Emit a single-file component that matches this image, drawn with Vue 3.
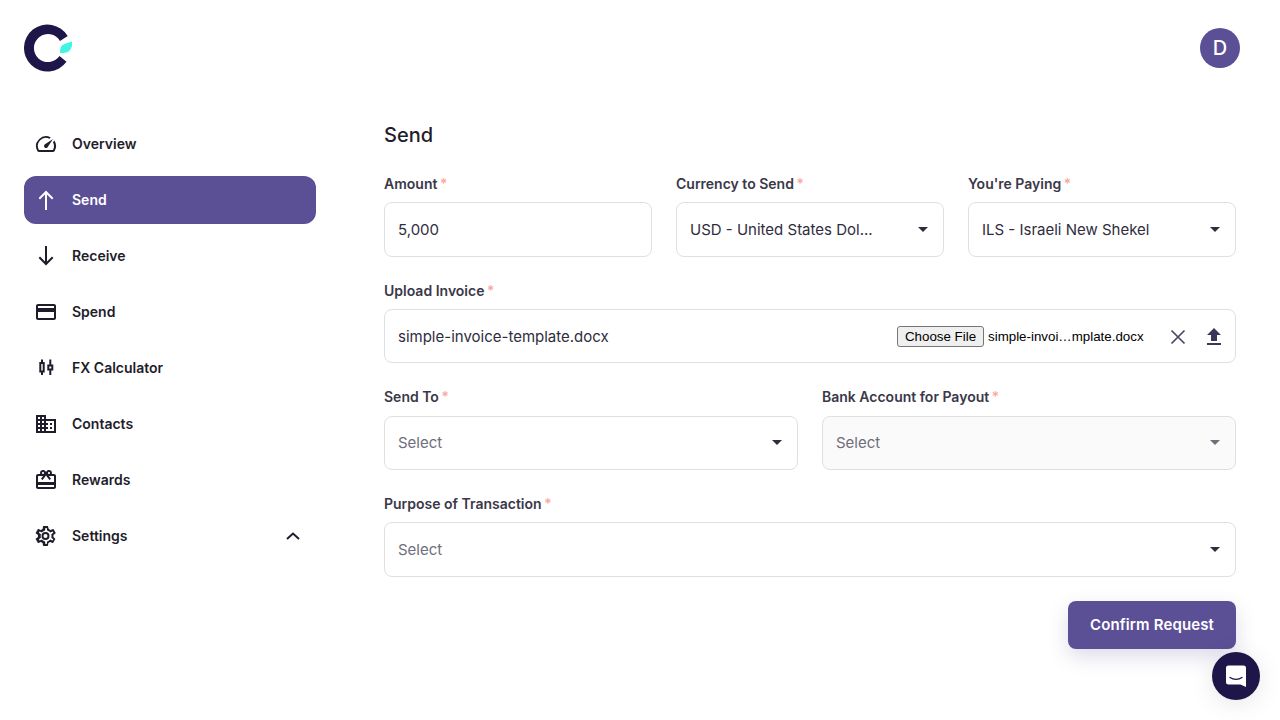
<script setup>
const navItems = [
  { label: 'Overview', icon: 'overview' },
  { label: 'Send', icon: 'send', active: true },
  { label: 'Receive', icon: 'receive' },
  { label: 'Spend', icon: 'spend' },
  { label: 'FX Calculator', icon: 'fx' },
  { label: 'Contacts', icon: 'contacts' },
  { label: 'Rewards', icon: 'rewards' },
  { label: 'Settings', icon: 'settings', chevron: true }
]
</script>

<template>
  <div class="page">
    <header class="topbar">
      <svg class="logo" width="48" height="48" viewBox="0 0 48 48">
        <path d="M43.700 12 36 17A14 14 0 1 0 35.500 32L42.500 37.800A23.500 23.500 0 1 1 43.700 12Z" fill="#1e1548" />
        <path d="M48 17.500V21C47.500 26 44 29 39.500 29L37 29C36.300 29 36 28.600 36 28L36.300 25C36.500 23 38 21.200 40 20.300C42.500 19.200 45 18.500 48 17.500Z" fill="#3ff5e6" />
      </svg>
      <div class="avatar">D</div>
    </header>

    <div class="body">
      <nav class="sidebar">
        <a v-for="item in navItems" :key="item.label" class="nav-item" :class="{ active: item.active }">
          <svg class="nav-icon" width="24" height="24" viewBox="0 0 24 24" fill="currentColor">
            <template v-if="item.icon === 'overview'">
              <path d="M20.400 8.600 19 10.300A8 8 0 0 1 19.200 17.500L19 18H5A8 8 0 0 1 15.300 6.700L16.800 5.400A10 10 0 0 0 3.300 19C3.700 19.600 4.300 20 5 20H19C19.700 20 20.300 19.600 20.700 19A10 10 0 0 0 20.400 8.600Z" />
              <path d="M10.600 15.400A2 2 0 0 0 13.400 15.400L19 7 10.600 12.600A2 2 0 0 0 10.600 15.400Z" />
            </template>
            <path v-else-if="item.icon === 'send'" d="M13 22V6.400l5 5L19.400 10 12 2.600 4.600 10 6 11.400l5-5V22Z" />
            <path v-else-if="item.icon === 'receive'" d="M11 2v15.600l-5-5L4.600 14 12 21.400 19.400 14 18 12.600l-5 5V2Z" />
            <path v-else-if="item.icon === 'spend'" d="M20 4H4C2.900 4 2 4.900 2 6v12c0 1.100.9 2 2 2h16c1.100 0 2-.9 2-2V6c0-1.100-.9-2-2-2Zm0 14H4v-6h16v6Zm0-10H4V6h16v2Z" />
            <template v-else-if="item.icon === 'fx'">
              <path d="M7 3.500h2V6h1.700v10.500H9V19H7v-2.500H5.300V6H7V3.500Zm.3 4.500v6.500h1.400V8H7.300Z" />
              <path d="M15.300 3.500h2v5h2v6h-2V19h-2v-4.500h-2v-6h2V3.500Zm0 7v2h2v-2h-2Z" />
            </template>
            <path v-else-if="item.icon === 'contacts'" d="M12 7V3H2v18h20V7H12ZM6 19H4v-2h2v2Zm0-4H4v-2h2v2Zm0-4H4V9h2v2Zm0-4H4V5h2v2Zm4 12H8v-2h2v2Zm0-4H8v-2h2v2Zm0-4H8V9h2v2Zm0-4H8V5h2v2Zm10 12h-8v-2h2v-2h-2v-2h2v-2h-2V9h8v10Zm-2-8h-2v2h2v-2Zm0 4h-2v2h2v-2Z" />
            <path v-else-if="item.icon === 'rewards'" d="M20 6h-2.200c.1-.3.200-.7.200-1 0-1.700-1.300-3-3-3-1 0-1.900.5-2.500 1.300L12 4l-.5-.7C10.900 2.500 10 2 9 2 7.300 2 6 3.300 6 5c0 .3.100.7.200 1H4c-1.100 0-2 .9-2 2v11c0 1.100.9 2 2 2h16c1.100 0 2-.9 2-2V8c0-1.100-.9-2-2-2ZM15 4c.6 0 1 .4 1 1s-.4 1-1 1-1-.4-1-1 .4-1 1-1ZM9 4c.6 0 1 .4 1 1s-.4 1-1 1-1-.4-1-1 .4-1 1-1Zm11 15H4v-2h16v2Zm0-5H4V8h5.100L7 10.800 8.600 12 12 7.400l3.400 4.600 1.600-1.200L14.900 8H20v6Z" />
            <path v-else-if="item.icon === 'settings'" d="M19.400 13c.1-.3.100-.7.100-1s0-.7-.1-1l2.100-1.600c.2-.2.200-.4.100-.6l-2-3.500c-.1-.2-.4-.3-.6-.2l-2.500 1c-.5-.4-1.100-.7-1.700-1L14 2.400c0-.2-.2-.4-.5-.4h-4c-.2 0-.4.200-.5.400l-.4 2.700c-.6.300-1.100.6-1.700 1l-2.500-1c-.2-.1-.5 0-.6.200l-2 3.500c-.1.200-.1.400.1.600L4 11c0 .3-.1.700-.1 1s0 .7.100 1l-2.100 1.600c-.2.200-.2.400-.1.600l2 3.500c.1.200.4.300.6.200l2.500-1c.5.400 1.100.7 1.700 1l.4 2.700c0 .2.200.4.500.4h4c.2 0 .4-.2.500-.4l.4-2.700c.6-.3 1.100-.6 1.700-1l2.500 1c.2.100.5 0 .6-.2l2-3.500c.1-.2.100-.4-.1-.6L19.400 13Zm-2-1.700c0 .3.100.5.100.7s0 .4-.1.700l-.1 1.100.9.700 1.100.8-.7 1.200-1.300-.5-1-.4-.9.700c-.4.300-.8.500-1.200.7l-1 .4-.2 1.100-.2 1.400h-1.400l-.2-1.400-.2-1.100-1-.4c-.4-.2-.8-.4-1.200-.7l-.9-.7-1 .4-1.300.5-.7-1.200 1.100-.8.900-.7-.1-1.100c-.1-.3-.1-.5-.1-.7s0-.4.100-.7l.1-1.100-.9-.7-1.100-.8.7-1.200 1.300.5 1 .4.900-.7c.4-.3.800-.5 1.200-.7l1-.4.200-1.100.2-1.400h1.400l.2 1.400.2 1.100 1 .4c.4.200.8.400 1.200.7l.9.700 1-.4 1.300-.5.7 1.200-1.100.8-.9.700.1 1.100ZM11.500 8a4 4 0 1 0 0 8 4 4 0 0 0 0-8Zm0 6a2 2 0 1 1 0-4 2 2 0 0 1 0 4Z" />
          </svg>
          <span class="nav-label">{{ item.label }}</span>
          <svg v-if="item.chevron" class="chevron" width="16" height="10" viewBox="0 0 16 10">
            <path d="M2 8 8 2.500 14 8" fill="none" stroke="currentColor" stroke-width="2" />
          </svg>
        </a>
      </nav>

      <main class="main">
        <h1 class="title">Send</h1>
        <form class="form" @submit.prevent>
          <div class="row thirds">
            <div class="field">
              <label class="label">Amount <i>*</i></label>
              <div class="control"><span class="value">5,000</span></div>
            </div>
            <div class="field">
              <label class="label">Currency to Send <i>*</i></label>
              <div class="control">
                <span class="value">USD - United States Dol...</span>
                <span class="caret"></span>
              </div>
            </div>
            <div class="field">
              <label class="label">You're Paying <i>*</i></label>
              <div class="control">
                <span class="value">ILS - Israeli New Shekel</span>
                <span class="caret"></span>
              </div>
            </div>
          </div>

          <div class="field">
            <label class="label">Upload Invoice <i>*</i></label>
            <div class="control upload-control">
              <span class="value grow">simple-invoice-template.docx</span>
              <button type="button" class="file-btn">Choose File</button>
              <span class="file-name">simple-invoi…mplate.docx</span>
              <svg class="clear" width="24" height="24" viewBox="0 0 24 24">
                <path d="M5.500 5.500 18.500 18.500M18.500 5.500 5.500 18.500" stroke="#4a4763" stroke-width="1.700" fill="none" />
              </svg>
              <svg class="upload" width="24" height="24" viewBox="0 0 24 24">
                <path d="M9 16h6v-6h4l-7-7-7 7h4v6Zm-4 2h14v2H5v-2Z" fill="#3a3655" />
              </svg>
            </div>
          </div>

          <div class="row halves">
            <div class="field">
              <label class="label">Send To <i>*</i></label>
              <div class="control">
                <span class="value placeholder">Select</span>
                <span class="caret"></span>
              </div>
            </div>
            <div class="field">
              <label class="label">Bank Account for Payout <i>*</i></label>
              <div class="control disabled">
                <span class="value placeholder">Select</span>
                <span class="caret"></span>
              </div>
            </div>
          </div>

          <div class="field">
            <label class="label">Purpose of Transaction <i>*</i></label>
            <div class="control">
              <span class="value placeholder">Select</span>
              <span class="caret"></span>
            </div>
          </div>

          <div class="actions">
            <button type="submit" class="confirm">Confirm Request</button>
          </div>
        </form>
      </main>
    </div>

    <div class="chat">
      <svg width="24" height="24" viewBox="0 0 24 24">
        <path d="M4.500 1.500h15A2.500 2.500 0 0 1 22 4v19l-5.500-2.500h-12A2.500 2.500 0 0 1 2 18V4a2.500 2.500 0 0 1 2.500-2.500Z" fill="#fff" />
        <path d="M6 13.500c3.500 2.600 8.500 2.600 12 0" stroke="#1e1548" stroke-width="1.300" fill="none" stroke-linecap="round" />
      </svg>
    </div>
  </div>
</template>

<style>
html, body {
  background: #fff;
}
</style>

<style scoped>
.page {
  position: relative;
  height: 720px;
  overflow: hidden;
  font-family: Inter, "Liberation Sans", sans-serif;
  color: #1f1d2b;
}

.topbar {
  height: 96px;
  box-sizing: border-box;
  padding: 24px 40px 0 24px;
  display: flex;
  justify-content: space-between;
  align-items: flex-start;
}

.avatar {
  width: 40px;
  height: 40px;
  margin-top: 4px;
  border-radius: 50%;
  background: #5b4f96;
  color: #fff;
  font-size: 20px;
  font-weight: 500;
  display: flex;
  align-items: center;
  justify-content: center;
}

.body {
  display: flex;
  padding-top: 24px;
}

.sidebar {
  width: 292px;
  margin-left: 24px;
  display: flex;
  flex-direction: column;
  gap: 8px;
}

.nav-item {
  height: 48px;
  display: flex;
  align-items: center;
  padding: 0 12px 0 10px;
  border-radius: 12px;
  font-size: 14px;
  font-weight: 600;
  color: #1f1d2b;
}

.nav-item.active {
  background: #5b4f96;
  color: #fff;
}

.nav-icon {
  flex: none;
  margin-right: 14px;
}

.nav-label {
  flex: 1;
  padding-bottom: 2px;
}

.chevron {
  color: #1f1d2b;
  margin-right: 3px;
}

.main {
  width: 852px;
  margin-left: 68px;
}

.title {
  margin: 0 0 24px;
  font-size: 20px;
  line-height: 30px;
  font-weight: 500;
  color: #1f1d2b;
}

.form {
  display: flex;
  flex-direction: column;
  gap: 24px;
}

.row {
  display: grid;
  gap: 24px;
}

.thirds {
  grid-template-columns: repeat(3, 1fr);
}

.halves {
  grid-template-columns: repeat(2, 1fr);
}

.label {
  display: block;
  height: 20px;
  margin-bottom: 8.33px;
  font-size: 14px;
  line-height: 20px;
  font-weight: 600;
  color: #3a3849;
}

.label i {
  margin-left: -1px;
  font-style: normal;
  font-weight: 500;
  color: #fda79b;
}

.control {
  height: 54.34px;
  box-sizing: border-box;
  display: flex;
  align-items: center;
  padding: 0 13px;
  border: 1px solid #dfdfe6;
  border-radius: 8px;
  background: #fff;
}

.control.disabled {
  background: #fafafa;
}

.value {
  flex: 1;
  font-size: 15px;
  color: #2f2d3d;
  white-space: nowrap;
}

.value.placeholder {
  color: #6f6e7a;
}

.caret {
  width: 0;
  height: 0;
  margin-right: 2px;
  border-left: 5px solid transparent;
  border-right: 5px solid transparent;
  border-top: 5px solid #2f2d3d;
}

.disabled .caret {
  border-top-color: #6f6e7a;
}

.upload-control {
  padding-top: 1px;
}

.file-btn {
  font-family: "Liberation Sans", Arial, sans-serif;
  font-size: 13.333px;
  flex: none;
  height: 21px;
  width: 87px;
  padding: 0;
  box-sizing: border-box;
  background: #efefef;
  border: 1px solid #767676;
  border-radius: 3px;
  color: #000;
}

.file-name {
  margin-left: 4px;
  width: 156px;
  font-family: "Liberation Sans", Arial, sans-serif;
  font-size: 13.333px;
  color: #000;
  white-space: nowrap;
}

.clear {
  margin-left: 22px;
}

.upload {
  margin-left: 12px;
  margin-right: -4px;
}

.actions {
  display: flex;
  justify-content: flex-end;
}

.confirm {
  width: 168px;
  height: 48px;
  border: none;
  border-radius: 8px;
  background: #5b4f96;
  color: #fff;
  font-family: inherit;
  font-size: 15px;
  font-weight: 600;
  letter-spacing: 0.14px;
  box-shadow: 0 8px 20px rgba(91, 79, 150, 0.2);
}

.chat {
  position: absolute;
  left: 1212px;
  top: 652px;
  width: 48px;
  height: 48px;
  border-radius: 50%;
  background: #1e1548;
  display: flex;
  align-items: center;
  justify-content: center;
  box-shadow: 0 4px 24px rgba(0, 0, 0, 0.1);
}
</style>
